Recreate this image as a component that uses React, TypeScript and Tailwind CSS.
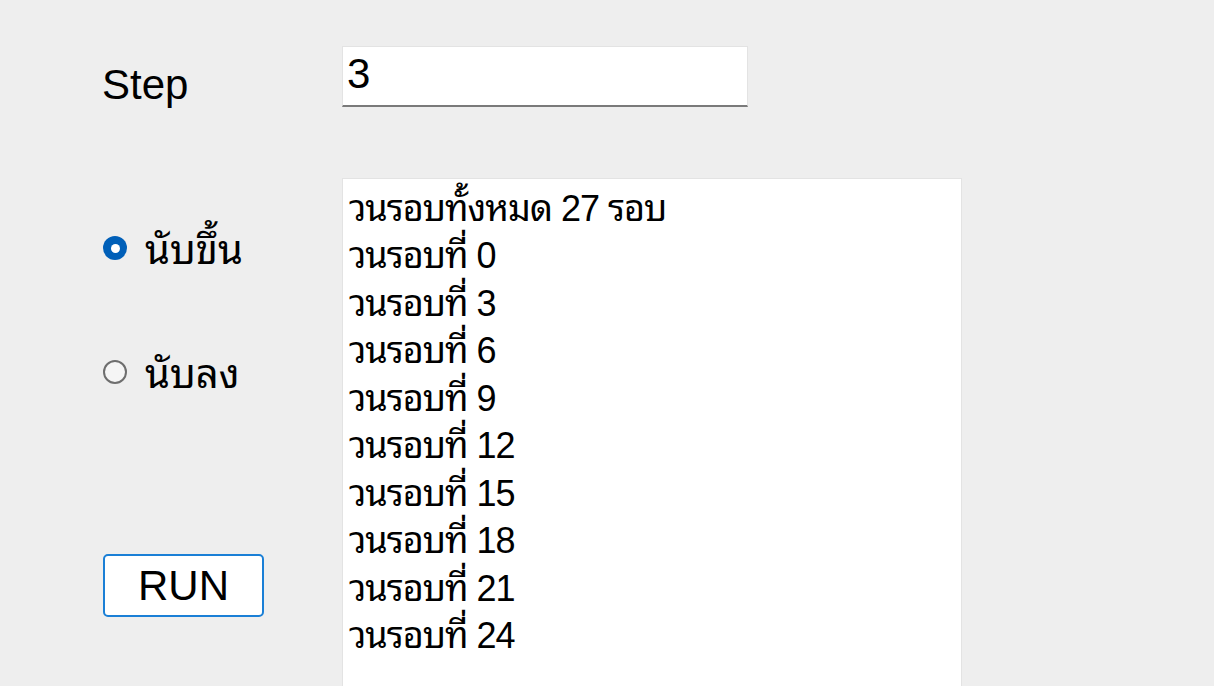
import React from "react";

const FONT =
  '"Liberation Sans", "Noto Sans Thai Looped", Tahoma, Loma, Garuda, Norasi, "Noto Serif Thai", "Noto Sans Thai", "Noto Sans", sans-serif';

export default function App() {
  const lines = ["วนรอบทั้งหมด 27 รอบ", ...[0, 3, 6, 9, 12, 15, 18, 21, 24].map((n) => `วนรอบที่ ${n}`)];
  return (
    <div
      className="w-[1214px] h-[686px] overflow-hidden bg-[#eeeeee] text-black"
      style={{ fontFamily: FONT }}
    >
      <div className="flex items-center pt-[46px]">
        <div className="w-[342px] pl-[102px] pt-[16px] text-[42px] leading-none">Step</div>
        <div className="w-[406px] h-[61px] bg-white border border-[#e3e3e3] border-b-2 border-b-[#7a7a7a] flex items-center pl-[4px] pb-[5px] text-[42px] leading-none">
          3
        </div>
      </div>
      <div className="flex mt-[71px]">
        <div className="w-[342px] pl-[103px] flex flex-col">
          <div className="mt-[46px] h-[48px] flex items-center gap-[18px]">
            <span className="w-[24px] h-[24px] rounded-full bg-[#005fb8] flex items-center justify-center">
              <span className="w-[9px] h-[9px] rounded-full bg-white" />
            </span>
            <span className="text-[40px] leading-none pt-[4px]">นับขึ้น</span>
          </div>
          <div className="mt-[76px] h-[48px] flex items-center gap-[18px]">
            <span className="w-[24px] h-[24px] rounded-full border-2 border-[#6e6e6e] bg-[#f5f5f5]" />
            <span className="text-[40px] leading-none pt-[4px]">นับลง</span>
          </div>
          <button className="mt-[158px] w-[161px] h-[63px] bg-white border-2 border-[#1a7fd6] rounded-[5px] text-[42px] leading-none flex items-center justify-center">
            RUN
          </button>
        </div>
        <div className="w-[620px] h-[520px] bg-white border border-[#e3e3e3] pl-[6px] pt-[6px]">
          {lines.map((l, i) => (
            <div key={i} className="h-[47.5px] flex items-center text-[36px] leading-none whitespace-nowrap tracking-[-1px]">
              {l}
            </div>
          ))}
        </div>
      </div>
    </div>
  );
}
